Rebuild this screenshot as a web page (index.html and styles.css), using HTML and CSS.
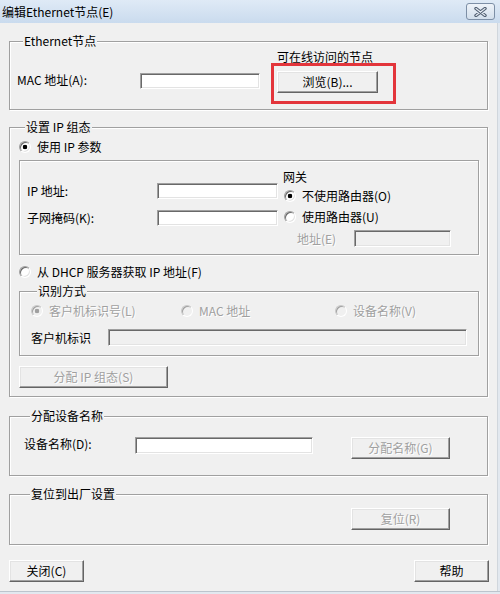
FILE: index.html
```html
<!DOCTYPE html>
<html lang="zh-CN">
<head>
    <meta charset="UTF-8">
    <title>编辑Ethernet节点(E)</title>
    <link rel="stylesheet" href="styles.css">
</head>
<body>
    <div class="window">
        <div class="titlebar">
            <span class="title">编辑Ethernet节点(E)</span>
            <span class="close-btn">
                <svg width="13" height="10" viewBox="0 0 13 10">
                    <path d="M2 1.5 L11 8.5 M11 1.5 L2 8.5" stroke="#4f5d70" stroke-width="3.4" stroke-linecap="round"/>
                    <path d="M2 1.5 L11 8.5 M11 1.5 L2 8.5" stroke="#e4eaf1" stroke-width="1.2" stroke-linecap="round"/>
                </svg>
            </span>
        </div>

        <div class="client">
            <!-- Ethernet 节点 -->
            <div class="group group-eth">
                <div class="group-title">Ethernet节点</div>
                <div class="eth-grid">
                    <span class="online-caption">可在线访问的节点</span>
                    <label class="mac-label">MAC 地址(A):</label>
                    <input type="text" class="mac-input">
                    <span class="browse-wrap">
                        <button class="btn browse-btn">浏览(B)...</button>
                    </span>
                </div>
            </div>

            <!-- IP 组态 -->
            <div class="group group-ip">
                <div class="group-title">设置 IP 组态</div>
                <label class="radio-line"><input type="radio" name="ipmode" checked>使用 IP 参数</label>

                <div class="etched static-box">
                    <div class="static-left">
                        <div class="field-row">
                            <label class="field-label">IP 地址:</label>
                            <input type="text" class="ip-input">
                        </div>
                        <div class="field-row">
                            <label class="field-label">子网掩码(K):</label>
                            <input type="text" class="ip-input">
                        </div>
                    </div>
                    <div class="gateway">
                        <div class="gw-title">网关</div>
                        <label class="radio-line gw-radio first"><input type="radio" name="gw" checked>不使用路由器(O)</label>
                        <label class="radio-line gw-radio second"><input type="radio" name="gw">使用路由器(U)</label>
                        <div class="gw-addr">
                            <label class="gw-addr-label dim">地址(E)</label>
                            <input type="text" class="gw-input" disabled>
                        </div>
                    </div>
                </div>

                <label class="radio-line dhcp"><input type="radio" name="ipmode">从 DHCP 服务器获取 IP 地址(F)</label>

                <div class="group group-ident">
                    <div class="group-title">识别方式</div>
                    <div class="ident-radios">
                        <label class="radio-line dim"><input type="radio" name="ident" checked disabled>客户机标识号(L)</label>
                        <label class="radio-line dim"><input type="radio" name="ident" disabled>MAC 地址</label>
                        <label class="radio-line dim"><input type="radio" name="ident" disabled>设备名称(V)</label>
                    </div>
                    <div class="field-row ident-row">
                        <label class="ident-label">客户机标识</label>
                        <input type="text" class="ident-input" disabled>
                    </div>
                </div>

                <button class="btn assign-ip" disabled>分配 IP 组态(S)</button>
            </div>

            <!-- 设备名称 -->
            <div class="group group-name">
                <div class="group-title">分配设备名称</div>
                <div class="action-row">
                    <label class="name-label">设备名称(D):</label>
                    <input type="text" class="name-input">
                    <button class="btn side-btn" disabled>分配名称(G)</button>
                </div>
            </div>

            <!-- 复位 -->
            <div class="group group-reset">
                <div class="group-title">复位到出厂设置</div>
                <div class="action-row">
                    <button class="btn side-btn" disabled>复位(R)</button>
                </div>
            </div>

            <div class="footer">
                <button class="btn footer-btn">关闭(C)</button>
                <button class="btn footer-btn help-btn">帮助</button>
            </div>
        </div>
    </div>
</body>
</html>
```

FILE: styles.css
```css
body {
    margin: 0;
    font-family: "Noto Sans CJK SC", sans-serif;
    font-size: 12px;
    color: #000;
    background: #f0f0f0;
    overflow: hidden;
}
.window {
    width: 500px;
    height: 594px;
    background: #f0f0f0;
    display: flex;
    flex-direction: column;
    box-shadow: inset 0 -2px 0 #e2e8ef, inset 0 -3px 0 #bcc4cd, inset -2px 0 0 #e2e8ef, inset -3px 0 0 #d0d6dc;
}
.titlebar {
    height: 23px;
    flex: none;
    box-sizing: border-box;
    display: flex;
    align-items: center;
    justify-content: space-between;
    padding: 1px 5px 0 2px;
    background: linear-gradient(#dfeaf6, #cadbee);
}
.title {
    line-height: 16px;
}
.close-btn {
    width: 29px;
    height: 17px;
    box-sizing: border-box;
    margin-top: -1px;
    border: 1px solid #7d8fa6;
    border-radius: 3px;
    background: linear-gradient(#eef3f9, #d3dfec);
    display: flex;
    align-items: center;
    justify-content: center;
}
.client {
    padding: 18px 12px 0 9px;
}

/* group boxes */
.group {
    border: 1px solid #a0a0a0;
    box-shadow: 1px 1px 0 #fff, inset 1px 1px 0 #fff;
}
.etched {
    border: 1px solid #a0a0a0;
    box-shadow: 1px 1px 0 #fff, inset 1px 1px 0 #fff;
}
.group-title {
    width: fit-content;
    margin: -8px 0 0 6px;
    padding: 0 1px;
    line-height: 14px;
    background: #f0f0f0;
}

/* controls */
input[type="text"] {
    appearance: none;
    box-sizing: border-box;
    margin: 0;
    padding: 0 2px;
    font: inherit;
    background: #fff;
    border: 1px solid;
    border-color: #a0a0a0 #fff #fff #a0a0a0;
    box-shadow: inset 1px 1px 0 #696969, inset -1px -1px 0 #e3e3e3;
    outline: none;
}
input[type="text"]:disabled {
    background: #f0f0f0;
}
input[type="radio"] {
    appearance: none;
    flex: none;
    margin: 0;
    width: 12px;
    height: 12px;
    box-sizing: border-box;
    border-radius: 50%;
    border: 1px solid;
    border-color: #a0a0a0 #fff #fff #a0a0a0;
    box-shadow: inset 1px 1px 0 #696969, inset -1px -1px 0 #e3e3e3;
    background: #fff;
}
input[type="radio"]:checked {
    background: radial-gradient(circle, #000 0 2px, #fff 2.6px);
}
input[type="radio"]:disabled {
    background: #f0f0f0;
    border-color: #c8c8c8 #fff #fff #c8c8c8;
    box-shadow: inset 1px 1px 0 #a0a0a0;
}
input[type="radio"]:disabled:checked {
    background: radial-gradient(circle, #a0a0a0 0 2px, #f0f0f0 2.6px);
}
.btn {
    appearance: none;
    box-sizing: border-box;
    margin: 0;
    padding: 0;
    height: 22px;
    font: inherit;
    line-height: 14px;
    color: #000;
    background: #f0f0f0;
    border: 1px solid;
    border-color: #fff #646464 #646464 #fff;
    box-shadow: inset -1px -1px 0 #a0a0a0, inset 1px 1px 0 #e3e3e3;
}
.btn:disabled {
    color: #a0a0a0;
    text-shadow: 1px 1px 0 #fff;
}
.dim {
    color: #a0a0a0;
    text-shadow: 1px 1px 0 #fff;
}
.radio-line {
    display: flex;
    align-items: center;
    gap: 6px;
    width: fit-content;
    height: 14px;
    line-height: 14px;
}

/* Ethernet 节点 */
.group-eth {
    padding: 0 0 16px 7px;
}
.eth-grid {
    display: grid;
    grid-template-columns: 123px 137px 101px;
    row-gap: 7px;
    align-items: start;
    margin-top: 2px;
}
.online-caption {
    grid-column: 3;
    grid-row: 1;
    line-height: 14px;
    white-space: nowrap;
}
.mac-label {
    grid-column: 1;
    grid-row: 2;
    margin-top: 2px;
    line-height: 14px;
}
.mac-input {
    grid-column: 2;
    grid-row: 2;
    margin-top: 2px !important;
    width: 120px;
    height: 16px;
}
.browse-wrap {
    grid-column: 3;
    grid-row: 2;
    position: relative;
    display: block;
}
.browse-wrap::after {
    content: "";
    position: absolute;
    left: -6px;
    top: -8px;
    right: -18px;
    bottom: -11px;
    border: 3px solid #e3353b;
}
.browse-btn {
    display: block;
    width: 101px;
}

/* IP 组态 */
.group-ip {
    margin-top: 17px;
    padding: 0 8px 8px 9px;
}
.group-ip > .radio-line:first-of-type {
    margin-top: 6px;
}
.static-box {
    display: flex;
    margin-top: 6px;
}
.static-left {
    display: flex;
    flex-direction: column;
    gap: 11px;
    padding: 22px 0 0 7px;
}
.field-row {
    display: flex;
    align-items: center;
}
.field-label {
    width: 130px;
    line-height: 16px;
}
.ip-input {
    width: 121px;
    height: 16px;
}
.gateway {
    margin-left: 5px;
    padding: 9px 0 7px;
}
.gw-title {
    line-height: 14px;
}
.gw-radio {
    margin-left: 1px;
}
.gw-radio.first {
    margin-top: 5px;
}
.gw-radio.second {
    margin-top: 7px;
}
.gw-addr {
    display: flex;
    align-items: center;
    margin-top: 6px;
    padding-left: 14px;
}
.gw-addr-label {
    width: 57px;
    line-height: 14px;
}
.gw-input {
    width: 97px;
    height: 17px;
}
.dhcp {
    margin-top: 10px;
}
.group-ident {
    margin-top: 12px;
    padding: 0 11px 9px 11px;
}
.ident-radios {
    display: grid;
    grid-template-columns: 150px 154px auto;
    margin-top: 6px;
}
.ident-row {
    margin-top: 11px;
}
.ident-label {
    width: 77px;
    line-height: 14px;
}
.ident-input {
    flex: 1;
    height: 17px;
}
.assign-ip {
    display: block;
    width: 149px;
    margin-top: 10px;
}

/* 设备名称 / 复位 */
.group-name {
    margin-top: 19px;
    padding: 0 37px 16px 14px;
}
.group-reset {
    margin-top: 18px;
    padding: 0 37px 14px 14px;
}
.action-row {
    display: flex;
    align-items: flex-start;
}
.group-name .action-row {
    margin-top: 14px;
}
.group-reset .action-row {
    margin-top: 7px;
}
.name-label {
    width: 111px;
    line-height: 14px;
}
.name-input {
    width: 178px;
    height: 17px;
}
.side-btn {
    width: 99px;
    margin-left: auto;
}

.footer {
    display: flex;
    justify-content: space-between;
    margin-top: 15px;
}
.footer-btn {
    width: 75px;
}
.help-btn {
    margin-right: -1px;
}
```
